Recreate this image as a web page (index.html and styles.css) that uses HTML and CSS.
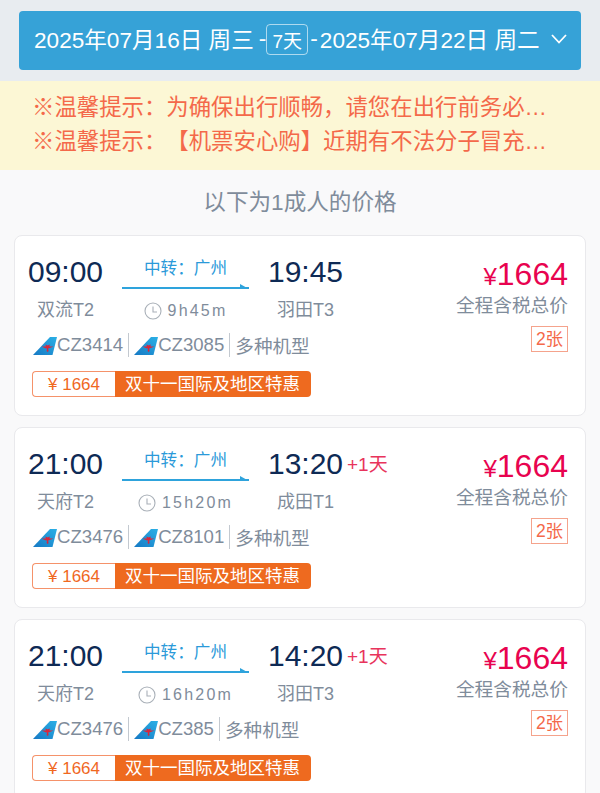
FILE: index.html
```html
<!DOCTYPE html>
<html lang="zh-CN">
<head>
<meta charset="utf-8">
<title>航班列表</title>
<link rel="stylesheet" href="styles.css">
</head>
<body>
<svg class="defs" width="0" height="0" aria-hidden="true">
  <defs>
    <linearGradient id="tailfill" x1="0" y1="1" x2="1" y2="0">
      <stop offset="0" stop-color="#1679c4"/>
      <stop offset="1" stop-color="#2bb0e6"/>
    </linearGradient>
  </defs>
  <symbol id="tail" viewBox="0 0 24 18">
    <path d="M0 18 L17 0 H24 L19.5 18 Z" fill="url(#tailfill)"/>
    <path d="M12.5 7.5 L14.6 8.6 L16.8 7.5 L16.3 10 L14.9 10.6 L15.6 14 L14.6 15 L13.6 14 L14.2 10.6 L12.9 10 Z" fill="#d9263c"/>
    <path d="M8.5 9.5 L20.5 9.5 L15.5 11.5 L13 11.5 Z" fill="#d9263c"/>
  </symbol>
  <symbol id="clock" viewBox="0 0 18 18">
    <circle cx="9" cy="9" r="8" fill="none" stroke="#a9b0b8" stroke-width="1.1"/>
    <path d="M9 4.5 V10 H13" fill="none" stroke="#a9b0b8" stroke-width="1.1"/>
  </symbol>
</svg>
<header class="top">
  <div class="datebar">
    <span class="date">2025年07月16日 周三</span>
    <span class="dash">-</span>
    <span class="days">7天</span>
    <span class="dash">-</span>
    <span class="date">2025年07月22日 周二</span>
    <svg class="chev" viewBox="0 0 16 10" width="16" height="10"><path d="M1 1 L8 8.5 L15 1" fill="none" stroke="#fff" stroke-width="1.8"/></svg>
  </div>
</header>
<section class="notice">
  <p>※温馨提示：为确保出行顺畅，请您在出行前务必…</p>
  <p>※温馨提示：【机票安心购】近期有不法分子冒充…</p>
</section>
<h2 class="caption">以下为1成人的价格</h2>
<main class="list">
  <article class="card">
    <div class="route">
      <div class="times">
        <div class="end"><span class="time">09:00</span><span class="port">双流T2</span></div>
        <div class="mid">
          <span class="via">中转：广州</span>
          <span class="arrow"></span>
          <span class="dur"><svg class="clock"><use href="#clock"/></svg>9h45m</span>
        </div>
        <div class="end arr"><span class="time">19:45</span><span class="port">羽田T3</span></div>
      </div>
      <div class="flights">
        <span class="flight"><svg class="tail"><use href="#tail"/></svg>CZ3414</span>
        <span class="flight"><svg class="tail"><use href="#tail"/></svg>CZ3085</span>
        <span class="flight plane">多种机型</span>
      </div>
      <div class="promo"><span class="promo-price">¥ 1664</span><span class="promo-name">双十一国际及地区特惠</span></div>
    </div>
    <div class="fare">
      <div class="price"><span class="yen">¥</span>1664</div>
      <div class="tax">全程含税总价</div>
      <div class="seats">2张</div>
    </div>
  </article>
  <article class="card">
    <div class="route">
      <div class="times">
        <div class="end"><span class="time">21:00</span><span class="port">天府T2</span></div>
        <div class="mid">
          <span class="via">中转：广州</span>
          <span class="arrow"></span>
          <span class="dur"><svg class="clock"><use href="#clock"/></svg>15h20m</span>
        </div>
        <div class="end arr"><span class="time">13:20<span class="plus">+1天</span></span><span class="port">成田T1</span></div>
      </div>
      <div class="flights">
        <span class="flight"><svg class="tail"><use href="#tail"/></svg>CZ3476</span>
        <span class="flight"><svg class="tail"><use href="#tail"/></svg>CZ8101</span>
        <span class="flight plane">多种机型</span>
      </div>
      <div class="promo"><span class="promo-price">¥ 1664</span><span class="promo-name">双十一国际及地区特惠</span></div>
    </div>
    <div class="fare">
      <div class="price"><span class="yen">¥</span>1664</div>
      <div class="tax">全程含税总价</div>
      <div class="seats">2张</div>
    </div>
  </article>
  <article class="card">
    <div class="route">
      <div class="times">
        <div class="end"><span class="time">21:00</span><span class="port">天府T2</span></div>
        <div class="mid">
          <span class="via">中转：广州</span>
          <span class="arrow"></span>
          <span class="dur"><svg class="clock"><use href="#clock"/></svg>16h20m</span>
        </div>
        <div class="end arr"><span class="time">14:20<span class="plus">+1天</span></span><span class="port">羽田T3</span></div>
      </div>
      <div class="flights">
        <span class="flight"><svg class="tail"><use href="#tail"/></svg>CZ3476</span>
        <span class="flight"><svg class="tail"><use href="#tail"/></svg>CZ385</span>
        <span class="flight plane">多种机型</span>
      </div>
      <div class="promo"><span class="promo-price">¥ 1664</span><span class="promo-name">双十一国际及地区特惠</span></div>
    </div>
    <div class="fare">
      <div class="price"><span class="yen">¥</span>1664</div>
      <div class="tax">全程含税总价</div>
      <div class="seats">2张</div>
    </div>
  </article>
</main>
</body>
</html>
```
FILE: styles.css
```css
* { box-sizing: border-box; }
html, body { margin: 0; padding: 0; }
body {
  width: 600px;
  height: 793px;
  overflow: hidden;
  background: #f9f9fa;
  font-family: "Liberation Sans", "Noto Sans CJK SC", sans-serif;
  color: #7f8c9b;
  text-spacing-trim: space-all;
  text-autospace: no-autospace;
}
.defs { position: absolute; }
.top { height: 81px; padding: 11px 19px 0; background: #e8ecf0; }
.datebar {
  display: flex;
  align-items: center;
  height: 59px;
  padding: 0 14px 4px 15px;
  background: #36a2d7;
  border-radius: 4px;
  color: #fff;
  font-size: 22.6px;
}
.date { white-space: pre; margin-bottom: 1px; }
.dash { margin: 0 0 0 5px; }
.days {
  display: flex;
  align-items: center;
  justify-content: center;
  width: 42px;
  height: 31px;
  margin-top: 1px;
  border: 1px solid rgba(255, 255, 255, .6);
  border-radius: 4px;
  font-size: 19px;
}
.days + .dash { margin: 0 2px 0 2px; }
.chev { margin-left: auto; margin-top: 1px; }
.notice { height: 89px; padding: 10px 0 0 32px; background: #fcf7d5; color: #f4694a; font-size: 22.4px; line-height: 34px; }
.notice p { margin: 0; white-space: nowrap; }
.caption { margin: 0; height: 65px; font-size: 22.6px; font-weight: 400; line-height: 65px; text-align: center; color: #7f8c9b; }
.list { display: flex; flex-direction: column; gap: 11px; padding: 0 14px; }
.card {
  display: flex;
  justify-content: space-between;
  flex: none;
  height: 181px;
  padding: 0 17px 0 13px;
  background: #fff;
  border: 1px solid #e9e9ec;
  border-radius: 8px;
}
.times { display: flex; height: 97px; padding-top: 18px; }
.end { display: flex; flex-direction: column; align-items: center; width: 75px; }
.time { position: relative; font-size: 30px; line-height: 36px; color: #0e2a55; }
.port { margin-top: 5px; font-size: 18px; line-height: 30px; }
.plus { position: absolute; left: 79px; top: 0; font-size: 19px; line-height: 38px; color: #e8345c; white-space: nowrap; }
.mid { display: flex; flex-direction: column; align-items: center; width: 127px; margin: 0 19px 0 19px; }
.via { font-size: 16.6px; line-height: 28px; margin-top: 1px; color: #2b9ad9; }
.arrow { position: relative; width: 127px; height: 2px; margin-top: 4px; background: #2ea3dc; }
.arrow::after {
  content: "";
  position: absolute;
  right: 0;
  bottom: 0;
  border-left: 9px solid transparent;
  border-left-color: #2ea3dc;
  border-top: 5px solid transparent;
}
.dur { display: flex; align-items: center; margin-top: 7px; font-size: 16px; line-height: 30px; letter-spacing: 2.2px; }
.clock { width: 18px; height: 18px; margin-right: 6px; }
.flights { display: flex; align-items: center; height: 24px; margin-left: 5px; }
.flight { display: flex; align-items: center; height: 24px; font-size: 18.6px; }
.flight + .flight { margin-left: 5px; padding-left: 5px; border-left: 1px solid #c3c9d0; }
.plane { padding-bottom: 2px; }
.tail { width: 24px; height: 18px; margin-top: 2px; }
.promo { display: flex; width: 279px; height: 26px; margin: 14px 0 0 4px; }
.promo-price {
  width: 83px;
  border: 1px solid #f5926a;
  border-right: 0;
  border-radius: 4px 0 0 4px;
  background: #fff;
  color: #f0681f;
  font-size: 17px;
  line-height: 25px;
  text-align: center;
}
.promo-name {
  flex: 1;
  padding-left: 10px;
  border-radius: 0 4px 4px 0;
  background: #ee6a1f;
  color: #fff;
  font-size: 17.5px;
  line-height: 26px;
  white-space: nowrap;
}
.fare { display: flex; flex-direction: column; align-items: flex-end; padding-top: 19px; }
.price { font-size: 32px; line-height: 38px; color: #e8034f; }
.yen { font-size: 24px; margin-right: 0; }
.tax { margin-top: -3px; font-size: 18.7px; line-height: 26px; }
.seats {
  width: 37px;
  height: 26px;
  margin: 7px 0 0 0;
  border: 1px solid #f5a38c;
  color: #f4694a;
  font-size: 17.5px;
  line-height: 24px;
  text-align: center;
}
```
